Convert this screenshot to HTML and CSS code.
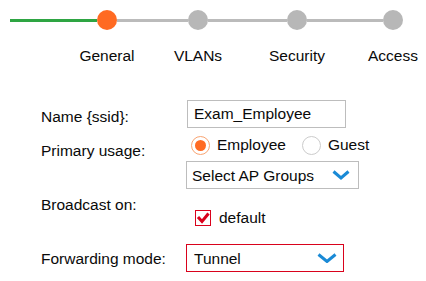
FILE: index.html
```html
<!DOCTYPE html>
<html lang="en">

<head>
    <meta charset="UTF-8">
    <meta name="viewport" content="width=device-width, initial-scale=1.0">
    <title>New WLAN</title>
    <link rel="stylesheet" href="styles.css">
</head>

<body>
    <section class="stepper">
        <div class="track">
            <div class="seg seg-done seg-1"></div>
            <div class="dot dot-active"></div>
            <div class="seg seg-2"></div>
            <div class="dot"></div>
            <div class="seg seg-3"></div>
            <div class="dot"></div>
            <div class="seg seg-4"></div>
            <div class="dot"></div>
        </div>
        <div class="step-labels">
            <span class="step-label">General</span>
            <span class="step-label">VLANs</span>
            <span class="step-label">Security</span>
            <span class="step-label">Access</span>
        </div>
    </section>

    <form class="wlan-form">
        <div class="form-row row-name">
            <label class="form-label">Name {ssid}:</label>
            <div class="form-control">
                <input type="text" class="text-input" value="Exam_Employee">
            </div>
        </div>

        <div class="form-row row-usage">
            <label class="form-label">Primary usage:</label>
            <div class="form-control">
                <div class="radio-group">
                    <span class="radio radio-checked"></span>
                    <span class="radio-text">Employee</span>
                    <span class="radio"></span>
                    <span class="radio-text">Guest</span>
                </div>
                <div class="dropdown dropdown-groups">
                    <span>Select AP Groups</span>
                    <svg class="chevron" width="18" height="10" viewBox="0 0 18 10">
                        <path d="M1.5 1.5 L9 8 L16.5 1.5" fill="none" stroke="#1a8ad6" stroke-width="3"/>
                    </svg>
                </div>
            </div>
        </div>

        <div class="form-row row-broadcast">
            <label class="form-label">Broadcast on:</label>
            <div class="form-control">
                <div class="check-item">
                    <span class="checkbox">
                        <svg width="14" height="14" viewBox="0 0 14 14">
                            <path d="M2 6 L6 10.5 L12.5 2.5" fill="none" stroke="#d9021c" stroke-width="3"/>
                        </svg>
                    </span>
                    <span class="check-text">default</span>
                </div>
            </div>
        </div>

        <div class="form-row row-forwarding">
            <label class="form-label">Forwarding mode:</label>
            <div class="form-control">
                <div class="dropdown dropdown-error">
                    <span>Tunnel</span>
                    <svg class="chevron" width="20" height="10" viewBox="0 0 20 10">
                        <path d="M1.5 1.5 L10 8.5 L18.5 1.5" fill="none" stroke="#1a8ad6" stroke-width="3"/>
                    </svg>
                </div>
            </div>
        </div>
    </form>
</body>

</html>
```

FILE: styles.css
```css
body {
    margin: 0;
    background-color: #ffffff;
    color: #0a0a0a;
    font-family: 'Liberation Sans', Arial, sans-serif;
    font-size: 15.5px;
    line-height: 17px;
}

/* wizard steps */

.track {
    display: flex;
    align-items: center;
    margin-top: 10px;
    padding-left: 10px;
    height: 20px;
}

.seg {
    height: 3px;
    background-color: #bbbbbb;
}

.seg-done {
    background-color: #2ea543;
}

.seg-1 { width: 87px; }
.seg-2 { width: 71px; }
.seg-3 { width: 79px; }
.seg-4 { width: 76px; }

.dot {
    width: 20px;
    height: 20px;
    border-radius: 50%;
    background-color: #b7b7b7;
}

.dot-active {
    background-color: #ff6a22;
}

.step-labels {
    display: flex;
    margin-top: 17px;
    padding-left: 75px;
}

.step-label {
    width: 64px;
    text-align: center;
}

.step-label + .step-label {
    margin-left: 27px;
}

.step-label:nth-child(3) {
    margin-left: 35px;
}

.step-label:nth-child(4) {
    margin-left: 32px;
}

/* form */

.wlan-form {
    margin-top: 36px;
    padding-left: 41px;
}

.form-row {
    display: flex;
    align-items: flex-start;
}

.form-label {
    width: 145px;
    flex-shrink: 0;
}

.form-control {
    display: flex;
    flex-direction: column;
    align-items: flex-start;
}

.row-name .form-label { padding-top: 8px; }

.row-usage { margin-top: 8px; }
.row-usage .form-label { padding-top: 6px; }

.row-broadcast { margin-top: 7px; }
.row-broadcast .form-control { padding-top: 13px; }

.row-forwarding { margin-top: 18px; }
.row-forwarding .form-label { padding-top: 6px; }

.text-input {
    box-sizing: border-box;
    width: 159px;
    height: 28px;
    margin: 0 0 0 1px;
    padding: 0 6px;
    border: 1px solid #bdbdbd;
    border-radius: 0;
    font-family: inherit;
    font-size: 15.5px;
    color: #0a0a0a;
    outline: none;
}

.radio-group {
    display: flex;
    align-items: flex-start;
    height: 19px;
    padding-left: 5px;
}

.radio {
    box-sizing: border-box;
    width: 19px;
    height: 19px;
    border-radius: 50%;
    border: 1px solid #cccccc;
    display: flex;
    align-items: center;
    justify-content: center;
}

.radio-checked {
    border-color: #f9a472;
}

.radio-checked::after {
    content: "";
    width: 11px;
    height: 11px;
    border-radius: 50%;
    background-color: #ff6a22;
}

.radio-text {
    margin-left: 7px;
    margin-right: 16px;
}

.dropdown {
    box-sizing: border-box;
    display: flex;
    align-items: center;
    justify-content: space-between;
    height: 28px;
    border: 1px solid #bdbdbd;
}

.dropdown-groups {
    width: 173px;
    margin-top: 6px;
    padding: 0 8px 0 5px;
}

.dropdown-error {
    width: 158px;
    border-color: #d9021c;
    padding: 0 6px 0 7px;
}

.chevron {
    display: block;
}

.check-item {
    display: flex;
    align-items: flex-start;
    padding-left: 9px;
}

.checkbox {
    box-sizing: border-box;
    width: 16px;
    height: 16px;
    margin-top: 1px;
    border: 1px solid #d9021c;
    display: flex;
    align-items: center;
    justify-content: center;
}

.checkbox svg {
    display: block;
}

.check-text {
    margin-left: 8px;
}
```
